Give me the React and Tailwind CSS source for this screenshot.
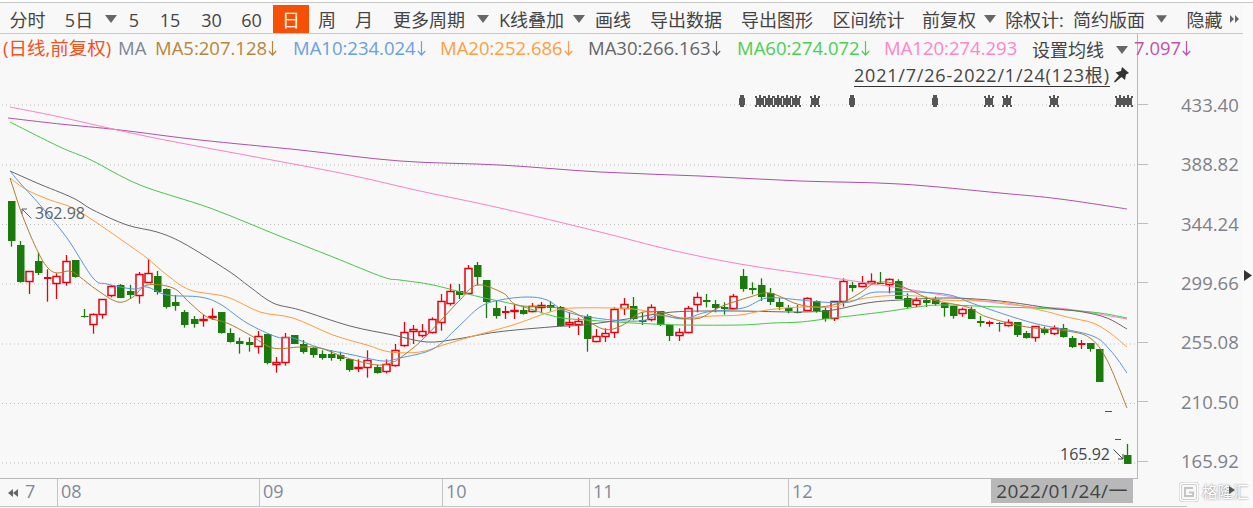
import React from "react";

const FONT = "font-['Open_Sans','Noto_Sans_CJK_SC',sans-serif]";

// candles measured from the picture: [x, kind, wickTop, bodyTop, bodyBottom, wickBottom]
const A = [[34,'g',123,123,242,260],[61,'g',243,255,365,368],[88,'r',334,334,367,402],[115,'g',278,303,338,345],[142,'f',328,351,356,425],[169,'r',340,349,373,417],[199,'r',285,304,368,377],[226,'g',300,300,350,353],[253,'g',447,468,472,473],[280,'r',460,463,496,521],[307,'r',418,418,466,476],[334,'r',375,379,409,412],[361,'g',372,376,413,413],[391,'g',375,393,405,417],[418,'r',336,343,409,431],[445,'r',297,340,368,368],[472,'g',333,348,396,404],[499,'g',385,387,441,446],[526,'g',405,426,437,452],[553,'g',450,456,495,503],[583,'g',468,477,492,503],[610,'r',465,478,484,500],[637,'r',445,467,475,480],[664,'g',456,456,519,521],[691,'g',505,519,545,548],[718,'g',533,543,551,581],[748,'g',532,546,554,575],[775,'r',513,527,562,581],[802,'g',522,522,608,613],[829,'r',591,607,616,638],[856,'r',519,532,608,617],[883,'g',525,525,551,552],[910,'g',540,551,575,581],[940,'g',561,565,585,593],[967,'g',571,582,594,599],[994,'g',570,582,594,602],[1021,'g',575,584,597,603],[1048,'g',597,597,630,635],[1075,'r',598,622,628,636],[1102,'r',571,601,625,653],[1132,'g',614,621,640,641],[1159,'r',598,611,637,640],[1186,'r',552,569,617,620]];
const B = [[13,'r',216,247,287,290],[40,'r',225,238,247,282],[67,'r',222,244,257,262],[97,'r',202,207,250,250],[124,'r',132,154,220,242],[151,'r',102,124,161,167],[178,'g',102,124,134,147],[205,'r',45,55,131,131],[232,'g',36,45,80,106],[259,'g',90,90,156,204],[289,'g',150,174,197,206],[316,'f',168,184,188,207],[343,'r',163,181,187,207],[370,'g',168,180,191,194],[397,'r',159,169,187,187],[424,'r',156,166,175,190],[451,'g',153,165,173,185],[481,'g',168,171,227,229],[508,'r',187,217,224,234],[535,'r',203,214,225,255],[562,'g',193,197,266,305],[589,'r',237,259,275,277],[616,'r',235,250,260,276],[643,'r',172,178,250,264],[673,'r',144,163,178,195],[700,'g',141,168,206,211],[727,'g',185,210,215,225],[754,'r',163,172,209,214],[781,'g',183,183,224,228],[808,'g',224,224,258,273],[838,'r',235,247,257,273],[865,'r',168,175,250,250],[892,'r',127,142,166,187],[919,'g',132,151,155,172],[946,'g',150,162,173,187],[973,'g',157,171,177,194],[1000,'r',132,139,176,180],[1030,'g',57,78,117,125],[1057,'g',97,114,119,133],[1084,'g',85,105,140,153],[1111,'g',114,130,155,165],[1138,'g',144,156,172,180],[1165,'g',165,175,183,190],[1192,'g',165,185,187,190]];
const C = [[22,'r',112,115,153,153],[49,'g',121,124,153,158],[76,'g',143,150,178,185],[103,'r',124,124,176,183],[130,'r',55,64,125,140],[157,'g',66,74,84,95],[187,'r',48,68,82,82],[214,'r',40,64,72,72],[241,'g',36,68,72,72],[268,'r',55,58,75,100],[295,'g',58,63,116,116],[322,'g',100,114,140,147],[349,'r',112,120,134,141],[379,'g',110,120,128,141],[406,'g',110,118,131,137],[433,'g',128,130,143,170],[460,'g',137,137,167,176],[487,'r',143,147,163,170],[514,'g',140,148,176,176],[541,'g',168,183,190,200],[568,'f',182,187,193,200],[598,'g',186,188,192,215],[625,'r',178,186,197,200],[652,'g',186,186,225,231],[679,'g',213,218,234,236],[706,'r',199,199,235,245],[733,'g',200,208,220,224],[763,'r',196,204,222,225],[790,'g',192,203,231,233],[817,'g',228,234,261,264],[844,'f',240,250,255,267],[871,'g',250,250,266,275],[898,'g',267,267,365,365],[982,'g',552,585,611,611]];

const candles = [
  ...A.map(([x,k,a,b,c,d]) => [Math.round(x/3), k, 160+a/3, 160+b/3, 160+c/3, 160+d/3]),
  ...B.map(([x,k,a,b,c,d]) => [Math.round(400+x/3), k, 250+a/3, 250+b/3, 250+c/3, 250+d/3]),
  ...C.map(([x,k,a,b,c,d]) => [Math.round(800+x/3), k, 260+a/3, 260+b/3, 260+c/3, 260+d/3]),
];

const LINES = [
  ["#b04fa8","8,118 60,124 120,130 200,140 300,150 400,161 500,165 600,172 700,176 800,181 900,184 1000,193 1060,199 1127,209"],
  ["#ff80c4","10,107 60,117 150,137 272,160 350,175 420,191 500,208 600,232 671,250 740,264 820,276 900,288 967,299 1033,307 1067,309 1127,319"],
  ["#46c846","10,122 60,147 91,160 140,185 210,208 277,235 333,257 383,277 400,280 433,285 480,297 517,305 557,317 587,320 633,323 683,325 740,325 773,323 800,322 833,318 883,312 917,307 943,305 1000,307 1033,308 1067,310 1100,313 1127,318"],
  ["#666666","10,171 37,183 73,198 93,210 127,225 157,232 183,243 227,270 250,287 273,303 300,310 350,326 393,335 427,342 457,339 497,332 550,327 583,325 627,319 673,312 733,311 800,312 833,310 867,303 900,300 950,298 1000,301 1050,308 1083,312 1107,318 1127,329"],
  ["#ff9d3c","10,178 27,190 50,200 73,208 100,225 133,248 147,258 167,275 190,290 227,297 260,312 293,318 333,335 367,345 390,352 420,352 443,345 477,335 513,325 550,312 573,308 633,309 660,315 680,318 713,316 740,315 767,310 800,307 833,307 850,301 883,296 917,296 943,300 1000,302 1040,310 1067,317 1093,323 1110,333 1127,347"],
  ["#5b96dc","10,171 20,183 40,205 67,238 93,278 107,284 133,289 147,287 167,295 200,297 220,304 247,323 277,337 293,338 320,348 353,355 383,361 400,358 433,349 457,328 480,307 500,300 527,297 547,300 567,312 603,319 640,321 660,315 683,319 707,312 743,308 767,298 800,300 820,302 850,302 870,293 890,292 917,292 950,295 977,305 1033,323 1090,335 1110,350 1127,373"],
  ["#b07d2c","10,178 23,217 38,252 48,268 57,273 70,271 80,277 97,290 118,302 133,297 147,285 173,288 190,303 207,317 227,323 250,335 273,348 300,347 320,348 347,358 377,365 393,362 400,358 420,342 443,318 460,300 477,285 503,293 517,305 550,307 573,312 603,329 623,325 640,313 660,312 680,318 700,318 720,307 750,297 770,293 797,304 820,307 843,302 860,293 875,283 893,283 910,290 933,300 967,307 987,317 1027,327 1067,331 1090,338 1107,360 1127,408"],
];

function smooth(str) {
  const p = str.split(" ").map(s => s.split(",").map(Number));
  let d = "M" + p[0].join(" ");
  for (let i = 0; i < p.length - 1; i++) {
    const a = p[Math.max(i-1,0)], b = p[i], c = p[i+1], e = p[Math.min(i+2,p.length-1)];
    const c1x = b[0] + (c[0]-a[0])/6, c1y = b[1] + (c[1]-a[1])/6;
    const c2x = c[0] - (e[0]-b[0])/6, c2y = c[1] - (e[1]-b[1])/6;
    d += " C" + c1x.toFixed(1) + " " + c1y.toFixed(1) + " " + c2x.toFixed(1) + " " + c2y.toFixed(1) + " " + c[0] + " " + c[1];
  }
  return d;
}

const GRID = [105, 165, 224.5, 284, 344, 403.5, 463];
const LABELS = ["433.40","388.82","344.24","299.66","255.08","210.50","165.92"];

const Tri = () => <svg width="12" height="8" viewBox="0 0 12 8"><path d="M0 0H12L6 8Z" fill="#666"/></svg>;

const TOOLS = [
  ["分时","w-[55px]"],["5日","w-[48px]"],["tri","w-[15px]"],["5","w-[32px]"],["15","w-[40px]"],["30","w-[43px]"],["60","w-[37px]"],["gap","w-[3px]"],
  ["日","w-[36px] bg-[#f65006] text-white"],["周","w-[36px]"],["月","w-[38px]"],["更多周期","w-[92px]"],["tri","w-[15px]"],["K线叠加","w-[83px]"],["tri","w-[12px]"],
  ["画线","w-[56px]"],["导出数据","w-[90px]"],["导出图形","w-[92px]"],["区间统计","w-[91px]"],["前复权","w-[70px]"],["tri","w-[12px]"],["除权计:","w-[77px]"],["简约版面","w-[72px]"],["gap","w-[11px]"],["tri","w-[11px]"],["gap","w-[14px]"],["隐藏","w-[47px]"],
];

const LEGEND = [
  ["(日线,前复权)",false,"w-[115px] text-[#f4511e]"],
  ["MA",false,"w-[37px] text-[#7c8794]"],
  ["MA5:207.128",true,"w-[138px] text-[#b8863b]"],
  ["MA10:234.024",true,"w-[147px] text-[#6aa0e0]"],
  ["MA20:252.686",true,"w-[148px] text-[#ff9f40]"],
  ["MA30:266.163",true,"w-[149px] text-[#666666]"],
  ["MA60:274.072",true,"w-[147px] text-[#4ccf50]"],
  ["MA120:274.293",false,"w-[148px] text-[#ff85c8]"],
];

const Down = () => (
  <svg className="ml-[1px] shrink-0" width="9" height="15" viewBox="0 0 9 15" fill="none" stroke="currentColor" strokeWidth="1.2">
    <path d="M4.5 0V14M0.8 10L4.5 14L8.2 10"/>
  </svg>
);

function Marks() {
  const one = [742, 852, 935];
  const wide = [760, 769, 778, 787, 796, 815, 989, 1007, 1054, 1120, 1128];
  return (
    <g fill="#555">
      {one.map(x => <g key={x}><rect x={x-3} y={98} width={6} height={7}/><rect x={x-2} y={95} width={4} height={12}/></g>)}
      {wide.map(x => (
        <g key={x}>
          <rect x={x-4} y={98} width={8} height={7}/>
          <rect x={x-1} y={95} width={2} height={12}/>
          <rect x={x-5} y={96} width={2} height={2}/><rect x={x+3} y={96} width={2} height={2}/>
          <rect x={x-5} y={105} width={2} height={2}/><rect x={x+3} y={105} width={2} height={2}/>
        </g>
      ))}
    </g>
  );
}

function Chart() {
  return (
    <svg className="block" width="1137" height="478" viewBox="0 0 1137 478">
      {GRID.map(y => <line key={y} x1="2" x2="1137" y1={y} y2={y} stroke="#bdbdbd" strokeDasharray="1 3"/>)}
      <Marks/>
      {candles.map(([x,k,a,b,c,d],i) => {
        const col = k === 'g' ? "#1a7a0c" : "#e8000f";
        const at = Math.round(b), ab = Math.round(c);
        return (
          <g key={i}>
            <line x1={x+0.5} x2={x+0.5} y1={a} y2={d} stroke={col} strokeWidth="1.3"/>
            {k === 'g' && <rect x={x-3} y={at} width="7.5" height={Math.max(ab-at,1)} fill={col}/>}
            {k === 'r' && <rect x={x-3} y={at+0.5} width="7" height={Math.max(ab-at-1,1)} fill="#f8f8f8" stroke={col} strokeWidth="1.5"/>}
            {k === 'f' && <rect x={x-3} y={at} width="7.5" height={Math.max(ab-at,2)} fill={col}/>}
          </g>
        );
      })}
      <rect x="1105" y="411" width="7" height="1" fill="#1a7a0c"/>
      <rect x="1115" y="439" width="6" height="1" fill="#1a7a0c"/>
      {LINES.map(([c,p]) => <path key={c} d={smooth(p)} fill="none" stroke={c} strokeWidth="1"/>)}
    </svg>
  );
}

export default function App() {
  return (
    <div className={"relative w-[1253px] h-[508px] overflow-hidden bg-[#f8f8f8] " + FONT}>
      {/* the chart with its frame; legends lie over it */}
      <div className="absolute left-0 top-0 w-[1138px] h-[479px] border-r border-b border-[#b8b8b8]">
        <Chart/>
      </div>

      <div className="relative h-[3px] border-b border-[#c8c8c8] bg-white"></div>

      <div className="relative flex w-[1243px] h-[31px] border-b border-[#c8c8c8] bg-[#f8f8f8] pt-[2px] text-[18px] leading-[28px] text-[#444] whitespace-nowrap">
        {TOOLS.map(([t,c],i) => (
          <div key={i} className={"flex h-[28px] items-center justify-center " + c}>
            {t === "tri" ? <Tri/> : t === "gap" ? null : <span className="relative top-[1px]">{t}</span>}
          </div>
        ))}
        <div className="flex w-[12px] items-center justify-center text-[#666]">
          <svg width="9" height="8" viewBox="0 0 9 8"><path d="M0 0L4 4L0 8ZM5 0L9 4L5 8Z" fill="#666"/></svg>
        </div>
      </div>

      <div className="absolute left-0 top-[35px] flex h-[26px] items-center pl-[3px] text-[18.5px] whitespace-nowrap">
        {LEGEND.map(([t,a,c]) => <span key={t} className={"flex items-center " + c}>{t}{a && <Down/>}</span>)}
      </div>
      <div className="absolute left-[1134px] top-[35px] flex h-[26px] items-center text-[18.5px] text-[#c050b0] whitespace-nowrap">7.097<Down/></div>
      <div className="absolute left-[1025px] top-[36px] flex h-[28px] w-[108px] items-center bg-[#f8f8f8] pl-[7px] text-[18px] text-[#444]">
        <span>设置均线</span>
        <span className="ml-[12px] flex"><Tri/></span>
      </div>
      <div className="absolute left-[854px] top-[65px] flex items-start">
        <span className="border-b border-[#333] text-[18px] leading-[21px] tracking-[0.8px] text-[#444] whitespace-nowrap">2021/7/26-2022/1/24(123根)</span>
        <svg className="ml-[3px] mt-[2px]" width="16" height="16" viewBox="0 0 16 16"><path d="M9 0L16 6L13 7.5L12 13L8.5 10L2 15.5L1 14.5L6 8.5L2.5 5.5L8 4Z" fill="#333"/></svg>
      </div>

      <div className="absolute left-[21px] top-[203px] flex items-center text-[16px] leading-[20px] text-[#5a6470] whitespace-nowrap">
        <svg className="mr-[3px]" width="11" height="11" viewBox="0 0 11 11" fill="none" stroke="#5a6470"><path d="M1 1L10.5 10.5M1 6V1H6"/></svg>
        <span>362.98</span>
      </div>
      <div className="absolute left-[1060px] top-[444px] flex items-center text-[16px] leading-[20px] text-[#3f4650] whitespace-nowrap">
        <span>165.92</span>
        <svg className="ml-[3px] mt-[1px]" width="11" height="11" viewBox="0 0 11 11" fill="none" stroke="#3f4650"><path d="M0.5 0.5L10 10M10 5V10H5"/></svg>
      </div>

      {/* price axis */}
      <div className="absolute left-[1138px] top-[75px] flex flex-col">
        {LABELS.map(l => (
          <div key={l} className="flex h-[59.4px] w-[105px] items-center">
            <span className="h-px w-[10px] bg-[#bdbdbd]"></span>
            <span className="ml-[33px] text-[18.5px] text-[#808088]">{l}</span>
          </div>
        ))}
      </div>
      <div className="absolute left-[1243px] top-[3px] bottom-0 w-[10px] bg-[#fafafa]"></div>
      <svg className="absolute left-[1244px] top-[270px]" width="9" height="11" viewBox="0 0 9 11"><path d="M0 0L8 5.5L0 11Z" fill="#333"/></svg>

      {/* time axis */}
      <div className="absolute left-0 top-[479px] flex h-[28px] w-[1187px] border-b border-[#c4c4c4] text-[18px] leading-[24px] text-[#7f8a99]">
        <div className="flex w-[25px] items-center justify-end pr-[6px]">
          <svg width="11" height="8" viewBox="0 0 11 8"><path d="M5 0L0 4L5 8ZM10 0L5 4L10 8Z" fill="#666"/></svg>
        </div>
        <span className="w-[32px]">7</span>
        <span className="w-[202px] border-l border-[#c4c4c4] pl-[3px]">08</span>
        <span className="w-[183px] border-l border-[#c4c4c4] pl-[3px]">09</span>
        <span className="w-[147px] border-l border-[#c4c4c4] pl-[3px]">10</span>
        <span className="w-[199px] border-l border-[#c4c4c4] pl-[3px]">11</span>
        <span className="w-[203px] border-l border-[#c4c4c4] pl-[3px]">12</span>
        <span className="h-[24px] w-[142px] bg-[#b8b8b8] text-center text-[19px] tracking-[0.4px] text-[#444]">2022/01/24/一</span>
      </div>

      {/* watermark */}
      <div className="absolute left-[1179px] top-[482px] flex items-center text-white whitespace-nowrap">
        <svg width="20" height="20" viewBox="0 0 20 20" fill="none">
          <rect x="1.25" y="1.25" width="17.5" height="17.5" rx="3" stroke="#c4c4c4" strokeWidth="3"/>
          <rect x="1.25" y="1.25" width="17.5" height="17.5" rx="3" stroke="#ffffff" strokeWidth="1.5"/>
          <path d="M14 6H6V14H14V10.5H10" stroke="#c4c4c4" strokeWidth="2"/>
        </svg>
        <span className="ml-[3px] text-[15.5px] leading-[20px] [text-shadow:0_0_2px_#6a6a6a]">格隆汇</span>
      </div>
      <svg className="absolute left-[1229px] top-[486px]" width="6" height="8" viewBox="0 0 6 8"><path d="M0 0L6 4L0 8Z" fill="#555"/></svg>
    </div>
  );
}
